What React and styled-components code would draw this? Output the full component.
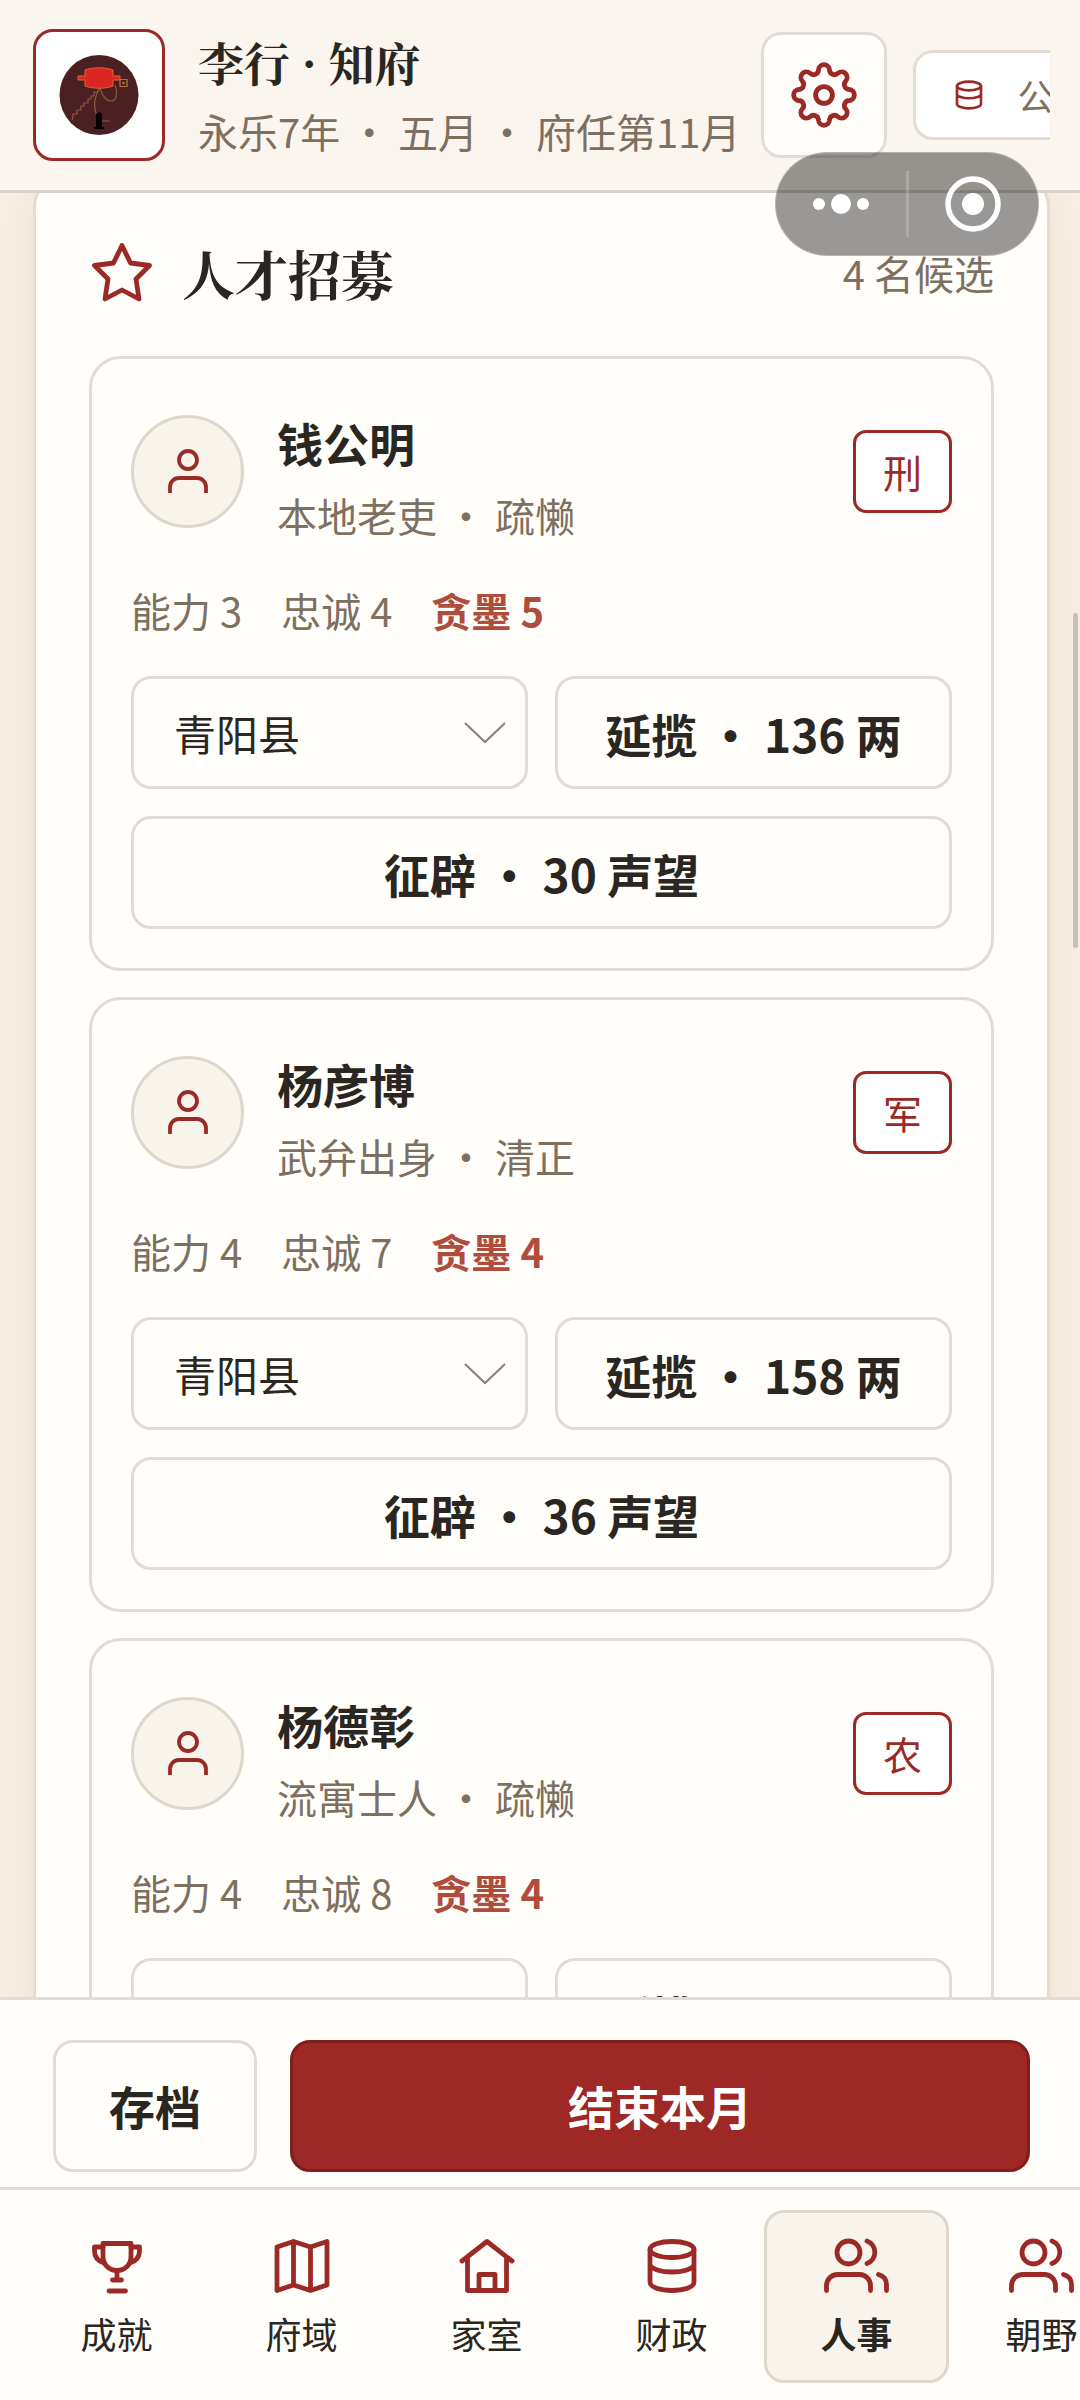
import React from "react";
import styled, { createGlobalStyle, css } from "styled-components";

const red = "#9b2a26";
const ink = "#2a2722";
const muted = "#7d7060";
const line = "#e1ddd6";
const paper = "#fffefa";
const sans = `"Noto Sans CJK SC", sans-serif`;

const Global = createGlobalStyle`
  * { box-sizing: border-box; }
  body { margin: 0; background: #f6eee1; font-family: ${sans}; color: ${ink}; }
  button, select { font-family: inherit; color: inherit; margin: 0; }
`;

const Screen = styled.div`
  height: 100vh;
  display: flex;
  flex-direction: column;
  overflow: hidden;
  position: relative;
`;

const Header = styled.header`
  flex: none;
  padding: 29px 30px 29px 33px;
  background: #faf5ee;
  border-bottom: 3px solid #d9d4ca;
`;

const HeaderRow = styled.div`
  display: flex;
  align-items: center;
  overflow: hidden;
`;

const Portrait = styled.div`
  flex: none;
  width: 132px;
  height: 132px;
  border: 3px solid ${red};
  border-radius: 20px;
  background: #fff;
  display: grid;
  place-items: center;
  margin-right: 33px;
`;

const Who = styled.div`
  flex: none;
  display: flex;
  flex-direction: column;
  gap: 11px;
  margin-right: 21px;
  white-space: nowrap;
`;

const WhoName = styled.h1`
  margin: 0;
  font-family: "Noto Serif CJK SC", "Liberation Serif", ${sans};
  font-size: 46px;
  line-height: 60px;
  font-weight: 700;
`;

const Muted = styled.p`
  margin: 0;
  font-size: 40px;
  line-height: 58px;
  color: ${muted};
  white-space: nowrap;
`;

const SettingsButton = styled.button`
  flex: none;
  width: 126px;
  height: 126px;
  padding: 0;
  border: 3px solid ${line};
  border-radius: 20px;
  background: ${paper};
  display: grid;
  place-items: center;
  margin-right: 26px;
`;

const Chip = styled.div`
  flex: none;
  height: 90px;
  padding: 0 35px;
  border: 3px solid ${line};
  border-radius: 20px;
  background: #fff;
  display: flex;
  align-items: center;
  gap: 30px;
  font-size: 36px;
  color: ${muted};
`;

const Capsule = styled.div`
  position: absolute;
  z-index: 3;
  top: 152px;
  right: 41px;
  width: 264px;
  height: 104px;
  border: 1px solid rgba(255, 255, 255, 0.25);
  border-radius: 52px;
  background: rgba(0, 0, 0, 0.4);
  display: flex;
  align-items: center;
`;

const CapsuleButton = styled.button`
  flex: 1;
  height: 100%;
  padding: 0;
  border: 0;
  background: none;
  display: grid;
  place-items: center;
`;

const CapsuleRule = styled.span`
  width: 3px;
  height: 66px;
  background: rgba(255, 255, 255, 0.2);
`;

const Main = styled.main`
  flex: 1;
  min-height: 0;
  overflow-y: auto;
  scrollbar-width: none;
  padding: 0 30px 0 33px;
`;

const Panel = styled.section`
  margin-top: -18px;
  padding: 53px;
  border: 3px solid ${line};
  border-radius: 32px;
  background: ${paper};
  box-shadow: 0 12px 36px rgba(90, 60, 20, 0.06);
`;

const PanelHead = styled.div`
  display: flex;
  align-items: center;
  gap: 27px;
  height: 83px;
  margin-bottom: 42px;
`;

const PanelTitle = styled.h2`
  flex: 1;
  margin: 0;
  font-family: "Noto Serif CJK SC", "Liberation Serif", ${sans};
  font-size: 53px;
  line-height: 80px;
  font-weight: 700;
`;

const List = styled.div`
  display: flex;
  flex-direction: column;
  gap: 26px;
`;

const Card = styled.article`
  padding: 39px;
  border: 3px solid ${line};
  border-radius: 32px;
  display: flex;
  flex-direction: column;
  gap: 36px;
`;

const CardHead = styled.div`
  display: flex;
  align-items: center;
`;

const Avatar = styled.div`
  flex: none;
  width: 113px;
  height: 113px;
  border: 3px solid #ddd7cc;
  border-radius: 50%;
  background: #f9f4eb;
  display: grid;
  place-items: center;
  margin-right: 33px;
`;

const Person = styled.div`
  flex: 1;
`;

const PersonName = styled.h3`
  margin: 0;
  font-size: 46px;
  line-height: 88px;
  font-weight: 700;
`;

const Badge = styled.span`
  height: 83px;
  padding: 0 27px;
  border: 3px solid ${red};
  border-radius: 13px;
  background: #fff;
  color: ${red};
  font-size: 39px;
  line-height: 77px;
`;

const Stats = styled.div`
  display: flex;
  gap: 39px;
`;

const Stat = styled.span`
  font-size: 40px;
  line-height: 60px;
  color: ${muted};
  ${(p) =>
    p.$alert &&
    css`
      color: #b04c3c;
      font-weight: 700;
    `}
`;

const Actions = styled.div`
  display: grid;
  grid-template-columns: repeat(2, minmax(0, 1fr));
  gap: 27px;
`;

const SelectWrap = styled.label`
  display: grid;
  align-items: center;
  & > * {
    grid-area: 1 / 1;
  }
  & > svg {
    justify-self: end;
    margin-right: 22px;
    pointer-events: none;
  }
`;

const Select = styled.select`
  appearance: none;
  width: 100%;
  height: 113px;
  padding: 0 40px;
  border: 3px solid ${line};
  border-radius: 20px;
  background: ${paper};
  font-size: 42px;
`;

const Button = styled.button`
  height: ${(p) => (p.$tall ? 132 : 113)}px;
  padding: ${(p) => (p.$tall ? "0 53px 2px" : "0 20px")};
  border: 3px solid ${(p) => (p.$primary ? "#7f1f1c" : line)};
  border-radius: 20px;
  background: ${(p) => (p.$primary ? "#9d2825" : paper)};
  color: ${(p) => (p.$primary ? "#fff" : ink)};
  font-size: 46px;
  font-weight: 600;
  white-space: nowrap;
  ${(p) => p.$wide && "grid-column: 1 / -1;"}
  ${(p) => p.$primary && "flex: 1;"}
`;

const ScrollThumb = styled.div`
  position: absolute;
  top: 613px;
  right: 2px;
  width: 5px;
  height: 335px;
  border-radius: 3px;
  background: #c6c2b9;
`;

const ActionBar = styled.div`
  flex: none;
  display: flex;
  gap: 33px;
  padding: 40px 50px 15px 53px;
  border-top: 3px solid ${line};
  background: ${paper};
`;

const Nav = styled.nav`
  flex: none;
  display: flex;
  overflow: hidden;
  padding: 20px 24px 17px;
  border-top: 3px solid ${line};
  background: ${paper};
`;

const NavItem = styled.a`
  flex: none;
  width: 185px;
  height: 173px;
  padding-top: 20px;
  border: 3px solid ${(p) => (p.$active ? "#ddd7cc" : "transparent")};
  border-radius: 20px;
  background: ${(p) => (p.$active ? "#f9f4eb" : "transparent")};
  color: ${ink};
  font-size: 36px;
  line-height: 54px;
  font-weight: ${(p) => (p.$active ? 700 : 400)};
  text-decoration: none;
  display: flex;
  flex-direction: column;
  align-items: center;
  gap: 7px;
  & > svg {
    flex: none;
  }
`;

const Emblem = () => (
  <svg width="80" height="82" viewBox="0 0 80 82" fill="none">
    <ellipse cx="40" cy="41" rx="39.5" ry="40" fill="#4a2022" />
    <g stroke="#8f5a3c" strokeWidth="1.2">
      <path d="M41 34l-3 4h-3v4h-3v3h-3v4h-4v3h-3v4h-4v4h-4v3l-1 3" />
      <path d="M41 34c-6 9-7 20-2 30M41 67h10M41 34c2 7 6 13 11 13 6 0 7-9 4-16" />
      <path d="M61 25.500h7v7h-7zM64 28.500h1v1h-1z" stroke="#b5773c" />
    </g>
    <path d="M19 22h7v-6c8-3 20-3 28 0v6h7v4h-7v6c-8 3-20 3-28 0v-6h-7z" fill="#dc2624" stroke="#e0642e" />
    <path d="M37 60l3-2 3 2v13h2v2H35v-2h2z" fill="#000" />
  </svg>
);

/* Eight convex lobes joined by tangent concave arcs. */
const gearPath = (() => {
  const lobeAt = 25;
  const lobeR = 5.5;
  const valleyAt = 27.4;
  const valleyR = 5;
  const share = lobeR / (lobeR + valleyR);
  const polar = (r, a) => [r * Math.cos(a), r * Math.sin(a)];
  const step = Math.PI / 8;
  const joint = (lobe, side) => {
    const l = polar(lobeAt, lobe * 2 * step);
    const v = polar(valleyAt, (lobe * 2 + side) * step);
    return [l[0] + (v[0] - l[0]) * share, l[1] + (v[1] - l[1]) * share]
      .map((n) => (n + 33).toFixed(2))
      .join(" ");
  };
  let d = `M${joint(0, -1)}`;
  for (let i = 0; i < 8; i += 1) {
    d += `A${lobeR} ${lobeR} 0 0 1 ${joint(i, 1)}`;
    d += `A${valleyR} ${valleyR} 0 0 0 ${joint(i + 1, -1)}`;
  }
  return `${d}z`;
})();

const GearIcon = () => (
  <svg width="66" height="66" viewBox="0 0 66 66" fill="none" stroke={red} strokeWidth="4.8">
    <path d={gearPath} />
    <circle cx="33" cy="33" r="8.400" />
  </svg>
);

const PersonIcon = () => (
  <svg width="56" height="56" viewBox="0 0 56 56" fill="none" stroke={red} strokeWidth="3.8">
    <circle cx="28" cy="17" r="9" />
    <path d="M10 50v-6a9 9 0 0 1 9-9h18a9 9 0 0 1 9 9v6" />
  </svg>
);

const Icon = ({ size = 66, children }) => (
  <svg
    width={size}
    height={size}
    viewBox="0 0 66 66"
    fill="none"
    stroke={red}
    strokeWidth="4.8"
    strokeLinecap="round"
    strokeLinejoin="round"
  >
    {children}
  </svg>
);

const StarIcon = () => (
  <Icon>
    <path d="M33 5.500l8.500 17.500L60.500 25.500 47 39 50 59 33 50 16 59 19 39 5.500 25.500 24.500 23z" />
  </Icon>
);

const TrophyIcon = () => (
  <Icon>
    <path d="M19 10.500h28v13c0 8-6 14-14 14s-14-6-14-14z" />
    <path d="M19 14h-8.500v4c0 6 3.500 10 9.500 12M47 14h8.500v4c0 6-3.500 10-9.500 12" />
    <path d="M33 38v9M28.500 47h9M25 58h16.500" />
  </Icon>
);

const MapIcon = () => (
  <Icon>
    <path d="M8 14L24.500 8.500 41.500 14 58 8.500V52L41.500 57.500 24.500 52 8 57.500zM24.500 8.500V52M41.500 14V57.500" />
  </Icon>
);

const HouseIcon = () => (
  <Icon>
    <path d="M8 28L33 8.500 58 28M13.500 25V57.500H52.500V25M25 57V41.500H41V57" />
  </Icon>
);

const CoinsIcon = ({ size }) => (
  <Icon size={size}>
    <ellipse cx="33" cy="16.500" rx="22" ry="8" />
    <path d="M11 16.500v33c0 4.500 10 8 22 8s22-3.500 22-8v-33M11 31c0 4.500 10 8 22 8s22-3.500 22-8" />
  </Icon>
);

const PeopleIcon = () => (
  <Icon>
    <circle cx="24.500" cy="19.500" r="11.500" />
    <path d="M2.500 57.500v-5a11 11 0 0 1 11-11h22a11 11 0 0 1 11 11v5" />
    <path d="M43 8a12 12 0 0 1 0 22.500M54.500 41.500c5 1.500 8 5 8 10v6" />
  </Icon>
);

const Chevron = () => (
  <svg width="42" height="22" viewBox="0 0 42 22" fill="none" stroke="#85827d" strokeWidth="2">
    <path d="M1 1l20 19L41 1" />
  </svg>
);

const candidates = [
  { name: "钱公明", origin: "本地老吏", trait: "疏懒", post: "刑", skill: 3, loyal: 4, greed: 5, silver: 136, fame: 30 },
  { name: "杨彦博", origin: "武弁出身", trait: "清正", post: "军", skill: 4, loyal: 7, greed: 4, silver: 158, fame: 36 },
  { name: "杨德彰", origin: "流寓士人", trait: "疏懒", post: "农", skill: 4, loyal: 8, greed: 4, silver: 162, fame: 37 },
];

const tabs = [
  { label: "成就", icon: <TrophyIcon /> },
  { label: "府域", icon: <MapIcon /> },
  { label: "家室", icon: <HouseIcon /> },
  { label: "财政", icon: <CoinsIcon /> },
  { label: "人事", icon: <PeopleIcon />, active: true },
  { label: "朝野", icon: <PeopleIcon /> },
];

function Candidate({ data }) {
  return (
    <Card>
      <CardHead>
        <Avatar>
          <PersonIcon />
        </Avatar>
        <Person>
          <PersonName>{data.name}</PersonName>
          <Muted>{`${data.origin} • ${data.trait}`}</Muted>
        </Person>
        <Badge>{data.post}</Badge>
      </CardHead>
      <Stats>
        <Stat>能力 {data.skill}</Stat>
        <Stat>忠诚 {data.loyal}</Stat>
        <Stat $alert>贪墨 {data.greed}</Stat>
      </Stats>
      <Actions>
        <SelectWrap>
          <Select aria-label="任所" defaultValue="青阳县">
            <option>青阳县</option>
          </Select>
          <Chevron />
        </SelectWrap>
        <Button type="button">{`延揽 • ${data.silver} 两`}</Button>
        <Button type="button" $wide>{`征辟 • ${data.fame} 声望`}</Button>
      </Actions>
    </Card>
  );
}

export default function App() {
  return (
    <Screen>
      <Global />
      <Header>
        <HeaderRow>
          <Portrait>
            <Emblem />
          </Portrait>
          <Who>
            <WhoName>李行 · 知府</WhoName>
            <Muted>永乐7年 • 五月 • 府任第11月</Muted>
          </Who>
          <SettingsButton type="button" aria-label="设置">
            <GearIcon />
          </SettingsButton>
          <Chip>
            <CoinsIcon size={36} />公
          </Chip>
        </HeaderRow>
      </Header>
      <Capsule>
        <CapsuleButton type="button" aria-label="更多">
          <svg width="58" height="22" viewBox="0 0 58 22" fill="#fff">
            <circle cx="7" cy="11" r="6" />
            <circle cx="29" cy="11" r="10" />
            <circle cx="51" cy="11" r="6" />
          </svg>
        </CapsuleButton>
        <CapsuleRule />
        <CapsuleButton type="button" aria-label="关闭">
          <svg width="56" height="56" viewBox="0 0 56 56">
            <circle cx="28" cy="28" r="25" fill="none" stroke="#fff" strokeWidth="5.5" />
            <circle cx="28" cy="28" r="11" fill="#fff" />
          </svg>
        </CapsuleButton>
      </Capsule>
      <Main>
        <Panel>
          <PanelHead>
            <StarIcon />
            <PanelTitle>人才招募</PanelTitle>
            <Muted>4 名候选</Muted>
          </PanelHead>
          <List>
            {candidates.map((c) => (
              <Candidate key={c.name} data={c} />
            ))}
          </List>
        </Panel>
      </Main>
      <ScrollThumb />
      <ActionBar>
        <Button type="button" $tall>
          存档
        </Button>
        <Button type="button" $tall $primary>
          结束本月
        </Button>
      </ActionBar>
      <Nav>
        {tabs.map((t) => (
          <NavItem key={t.label} href="#" $active={t.active}>
            {t.icon}
            <span>{t.label}</span>
          </NavItem>
        ))}
      </Nav>
    </Screen>
  );
}
